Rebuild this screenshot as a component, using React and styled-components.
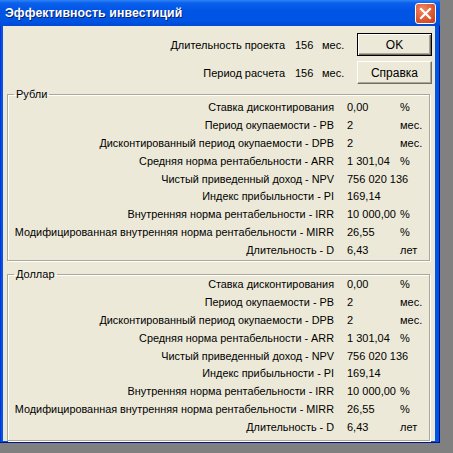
import React from "react";
import styled, { createGlobalStyle } from "styled-components";

const Global = createGlobalStyle`
  html, body { margin: 0; padding: 0; background: #808080; }
  body { font-family: "Liberation Sans", Arial, sans-serif; font-size: 11px; color: #000; }
`;

const Window = styled.div`
  width: 440px;
  height: 443px;
  box-sizing: border-box;
  display: flex;
  flex-direction: column;
  background: #0055e5;
  box-shadow: inset -1px -1px 0 #00138c, inset 1px 0 0 #0831d9;
`;

const TitleBar = styled.div`
  height: 26px;
  flex: none;
  display: flex;
  align-items: center;
  justify-content: space-between;
  padding: 0 4px 0 5px;
  background: linear-gradient(
    to bottom,
    #2e83f5 0%,
    #0a5fec 12%,
    #0055e5 40%,
    #0054e3 80%,
    #0048d5 100%
  );
`;

const Title = styled.span`
  color: #fff;
  font-weight: bold;
  font-size: 12.3px;
  letter-spacing: 0.1px;
  text-shadow: 1px 1px 0 #0a1e6e;
`;

const CloseButton = styled.div`
  width: 21px;
  height: 21px;
  box-sizing: border-box;
  border: 1px solid #fff;
  border-radius: 3px;
  background: radial-gradient(circle at 35% 30%, #f08a64 0%, #e2613a 45%, #c13c17 100%);
  display: flex;
  align-items: center;
  justify-content: center;
`;

const Client = styled.div`
  flex: 1;
  margin: 0 5px 4px 3px;
  background: #ece9d8;
  padding: 7px 3px 0 4px;
  display: flex;
  flex-direction: column;
`;

const TopGrid = styled.div`
  display: grid;
  grid-template-columns: 1fr 27px 35px 75px;
  grid-template-rows: 23px 23px;
  row-gap: 5px;
  align-items: center;
  margin-left: -4px;
`;

const TopLabel = styled.span`
  justify-self: end;
  padding-right: 10px;
  white-space: nowrap;
`;

const Cell = styled.span`
  white-space: nowrap;
`;

const Button = styled.button`
  width: 75px;
  height: 23px;
  box-sizing: border-box;
  font-family: "Liberation Sans", Arial, sans-serif;
  font-size: 12px;
  color: #000;
  background: #ece9d8;
  padding: 0;
  border: 1px solid ${(p) => (p.$default ? "#000" : "#fff")};
  ${(p) =>
    p.$default
      ? "box-shadow: inset 1px 1px 0 #fff, inset -1px -1px 0 #716f64, inset -2px -2px 0 #aca899;"
      : "border-right-color: #716f64; border-bottom-color: #716f64; box-shadow: inset -1px -1px 0 #aca899;"}
`;

const Group = styled.fieldset`
  margin: 0;
  padding: 0 0 1px 0;
  border: 1px solid #aca899;
  box-shadow: inset 1px 1px 0 #fff, 1px 1px 0 #fff;
  min-width: 0;
  margin-top: ${(p) => p.$top}px;
  margin-right: 2px;
`;

const Legend = styled.legend`
  margin-left: 6px;
  padding: 0 2px 0 2px;
  font-size: 11px;
  line-height: 12px;
`;

const Rows = styled.div`
  display: grid;
  grid-template-columns: 339px 53px 1fr;
  grid-auto-rows: 17.9px;
  align-items: center;
  margin-top: ${(p) => p.$shift}px;
  margin-bottom: ${(p) => p.$after}px;
`;

const Label = styled.span`
  justify-self: end;
  padding-right: 13px;
  white-space: nowrap;
  font-size: 10.85px;
`;

const metrics = [
  ["Ставка дисконтирования", "0,00", "%"],
  ["Период окупаемости - PB", "2", "мес."],
  ["Дисконтированный период окупаемости - DPB", "2", "мес."],
  ["Средняя норма рентабельности - ARR", "1 301,04", "%"],
  ["Чистый приведенный доход - NPV", "756 020 136", ""],
  ["Индекс прибыльности - PI", "169,14", ""],
  ["Внутренняя норма рентабельности - IRR", "10 000,00", "%"],
  ["Модифицированная внутренняя норма рентабельности - MIRR", "26,55", "%"],
  ["Длительность - D", "6,43", "лет"],
];

function MetricGroup({ title, top, shift, after }) {
  return (
    <Group $top={top}>
      <Legend>{title}</Legend>
      <Rows $shift={shift} $after={after}>
        {metrics.map(([l, v, u]) => (
          <React.Fragment key={l}>
            <Label>{l}</Label>
            <Cell>{v}</Cell>
            <Cell>{u}</Cell>
          </React.Fragment>
        ))}
      </Rows>
    </Group>
  );
}

export default function App() {
  return (
    <>
      <Global />
      <Window>
        <TitleBar>
          <Title>Эффективность инвестиций</Title>
          <CloseButton>
            <svg width="13" height="13" viewBox="0 0 13 13">
              <path d="M2 2 L11 11 M11 2 L2 11" stroke="#fff" strokeWidth="2.2" strokeLinecap="square" />
            </svg>
          </CloseButton>
        </TitleBar>
        <Client>
          <TopGrid>
            <TopLabel>Длительность проекта</TopLabel>
            <Cell>156</Cell>
            <Cell>мес.</Cell>
            <Button $default>OK</Button>
            <TopLabel>Период расчета</TopLabel>
            <Cell>156</Cell>
            <Cell>мес.</Cell>
            <Button>Справка</Button>
          </TopGrid>
          <MetricGroup title="Рубли" top={4} shift={-2} after={0} />
          <MetricGroup title="Доллар" top={7} shift={-5} after={3} />
        </Client>
      </Window>
    </>
  );
}
